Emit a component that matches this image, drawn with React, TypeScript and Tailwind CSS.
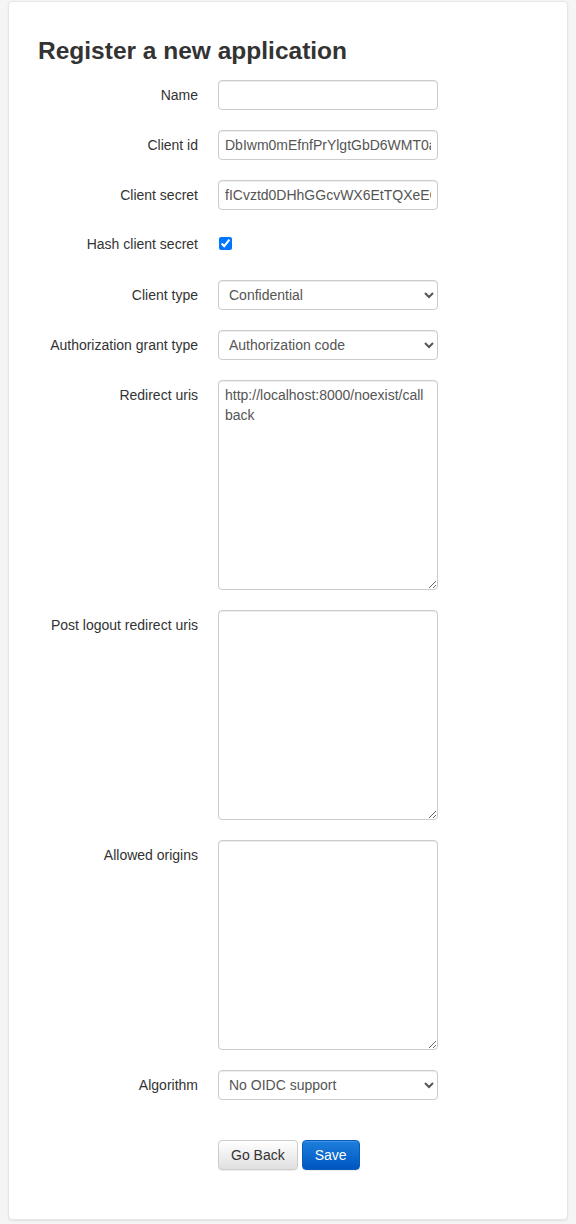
import React from 'react';

const inputCls =
  'block w-[220px] h-[30px] px-[6px] py-[4px] text-[14px] leading-[20px] text-[#555] bg-white border border-[#ccc] rounded-[4px] shadow-[inset_0_1px_1px_rgba(0,0,0,0.075)] outline-none';

const textareaCls =
  'block w-[220px] h-[210px] px-[6px] py-[4px] text-[14px] leading-[20px] text-[#555] bg-white border border-[#ccc] rounded-[4px] shadow-[inset_0_1px_1px_rgba(0,0,0,0.075)] outline-none resize-y';

const Row = ({ label, children, className = '' }: { label: string; children: React.ReactNode; className?: string }) => (
  <div className={`flex gap-5 mb-5 ${className}`}>
    <label className="w-[160px] shrink-0 text-right text-[14px] leading-[20px] text-[#333] pt-[5px]">{label}</label>
    <div>{children}</div>
  </div>
);

export default function App() {
  return (
    <div className="min-h-screen bg-[#f5f5f5] px-2 pt-px pb-[5px]" style={{ fontFamily: '"Liberation Sans", Arial, sans-serif' }}>
      <div className="bg-white border border-[#e6e6e6] rounded-[4px] shadow-[0_1px_2px_rgba(0,0,0,0.08)] pt-[36px] px-[29px] pb-[49px]">
        <h3 className="text-[24.5px] leading-[26px] font-bold text-[#333] mb-[16px]">Register a new application</h3>

        <form>
          <Row label="Name">
            <input type="text" className={inputCls} defaultValue="" />
          </Row>
          <Row label="Client id">
            <input type="text" className={inputCls} defaultValue="DbIwm0mEfnfPrYlgtGbD6WMT0aQk3Hn2LpVx8sRt" />
          </Row>
          <Row label="Client secret">
            <input type="text" className={inputCls} defaultValue="fICvztd0DHhGGcvWX6EtTQXeEGr9uZkPq2wLmN4bY" />
          </Row>
          <div className="flex gap-5 mb-5 h-[30px]">
            <label className="w-[160px] shrink-0 text-right text-[14px] leading-[20px] text-[#333] pt-[4px]">Hash client secret</label>
            <div className="pt-[7px] pl-px">
              <input type="checkbox" defaultChecked className="block w-[13px] h-[13px] m-0" />
            </div>
          </div>
          <Row label="Client type">
            <select className={inputCls} defaultValue="confidential">
              <option value="confidential">Confidential</option>
              <option value="public">Public</option>
            </select>
          </Row>
          <Row label="Authorization grant type">
            <select className={inputCls} defaultValue="authorization-code">
              <option value="authorization-code">Authorization code</option>
              <option value="implicit">Implicit</option>
              <option value="password">Resource owner password-based</option>
              <option value="client-credentials">Client credentials</option>
            </select>
          </Row>
          <Row label="Redirect uris">
            <textarea className={textareaCls} defaultValue="http://localhost:8000/noexist/callback" />
          </Row>
          <Row label="Post logout redirect uris">
            <textarea className={textareaCls} defaultValue="" />
          </Row>
          <Row label="Allowed origins">
            <textarea className={textareaCls} defaultValue="" />
          </Row>
          <Row label="Algorithm">
            <select className={inputCls} defaultValue="none">
              <option value="none">No OIDC support</option>
              <option value="RS256">RSA with SHA-2 256</option>
              <option value="HS256">HMAC with SHA-2 256</option>
            </select>
          </Row>

          <div className="flex gap-5 pt-5">
            <div className="w-[160px] shrink-0" />
            <div className="flex gap-1">
              <button
                type="button"
                className="h-[30px] px-[12px] text-[14px] leading-[20px] text-[#333] border border-[#ccc] rounded-[4px] bg-gradient-to-b from-white to-[#e0e0e0] shadow-[inset_0_1px_0_rgba(255,255,255,0.15),0_1px_1px_rgba(0,0,0,0.075)]"
              >
                Go Back
              </button>
              <button
                type="submit"
                className="h-[30px] px-[12px] text-[14px] leading-[20px] text-white border border-[#0a5cb8] rounded-[4px] bg-gradient-to-b from-[#1d7fdc] to-[#0056c2] shadow-[inset_0_1px_0_rgba(255,255,255,0.15),0_1px_1px_rgba(0,0,0,0.075)]"
              >
                Save
              </button>
            </div>
          </div>
        </form>
      </div>
    </div>
  );
}
